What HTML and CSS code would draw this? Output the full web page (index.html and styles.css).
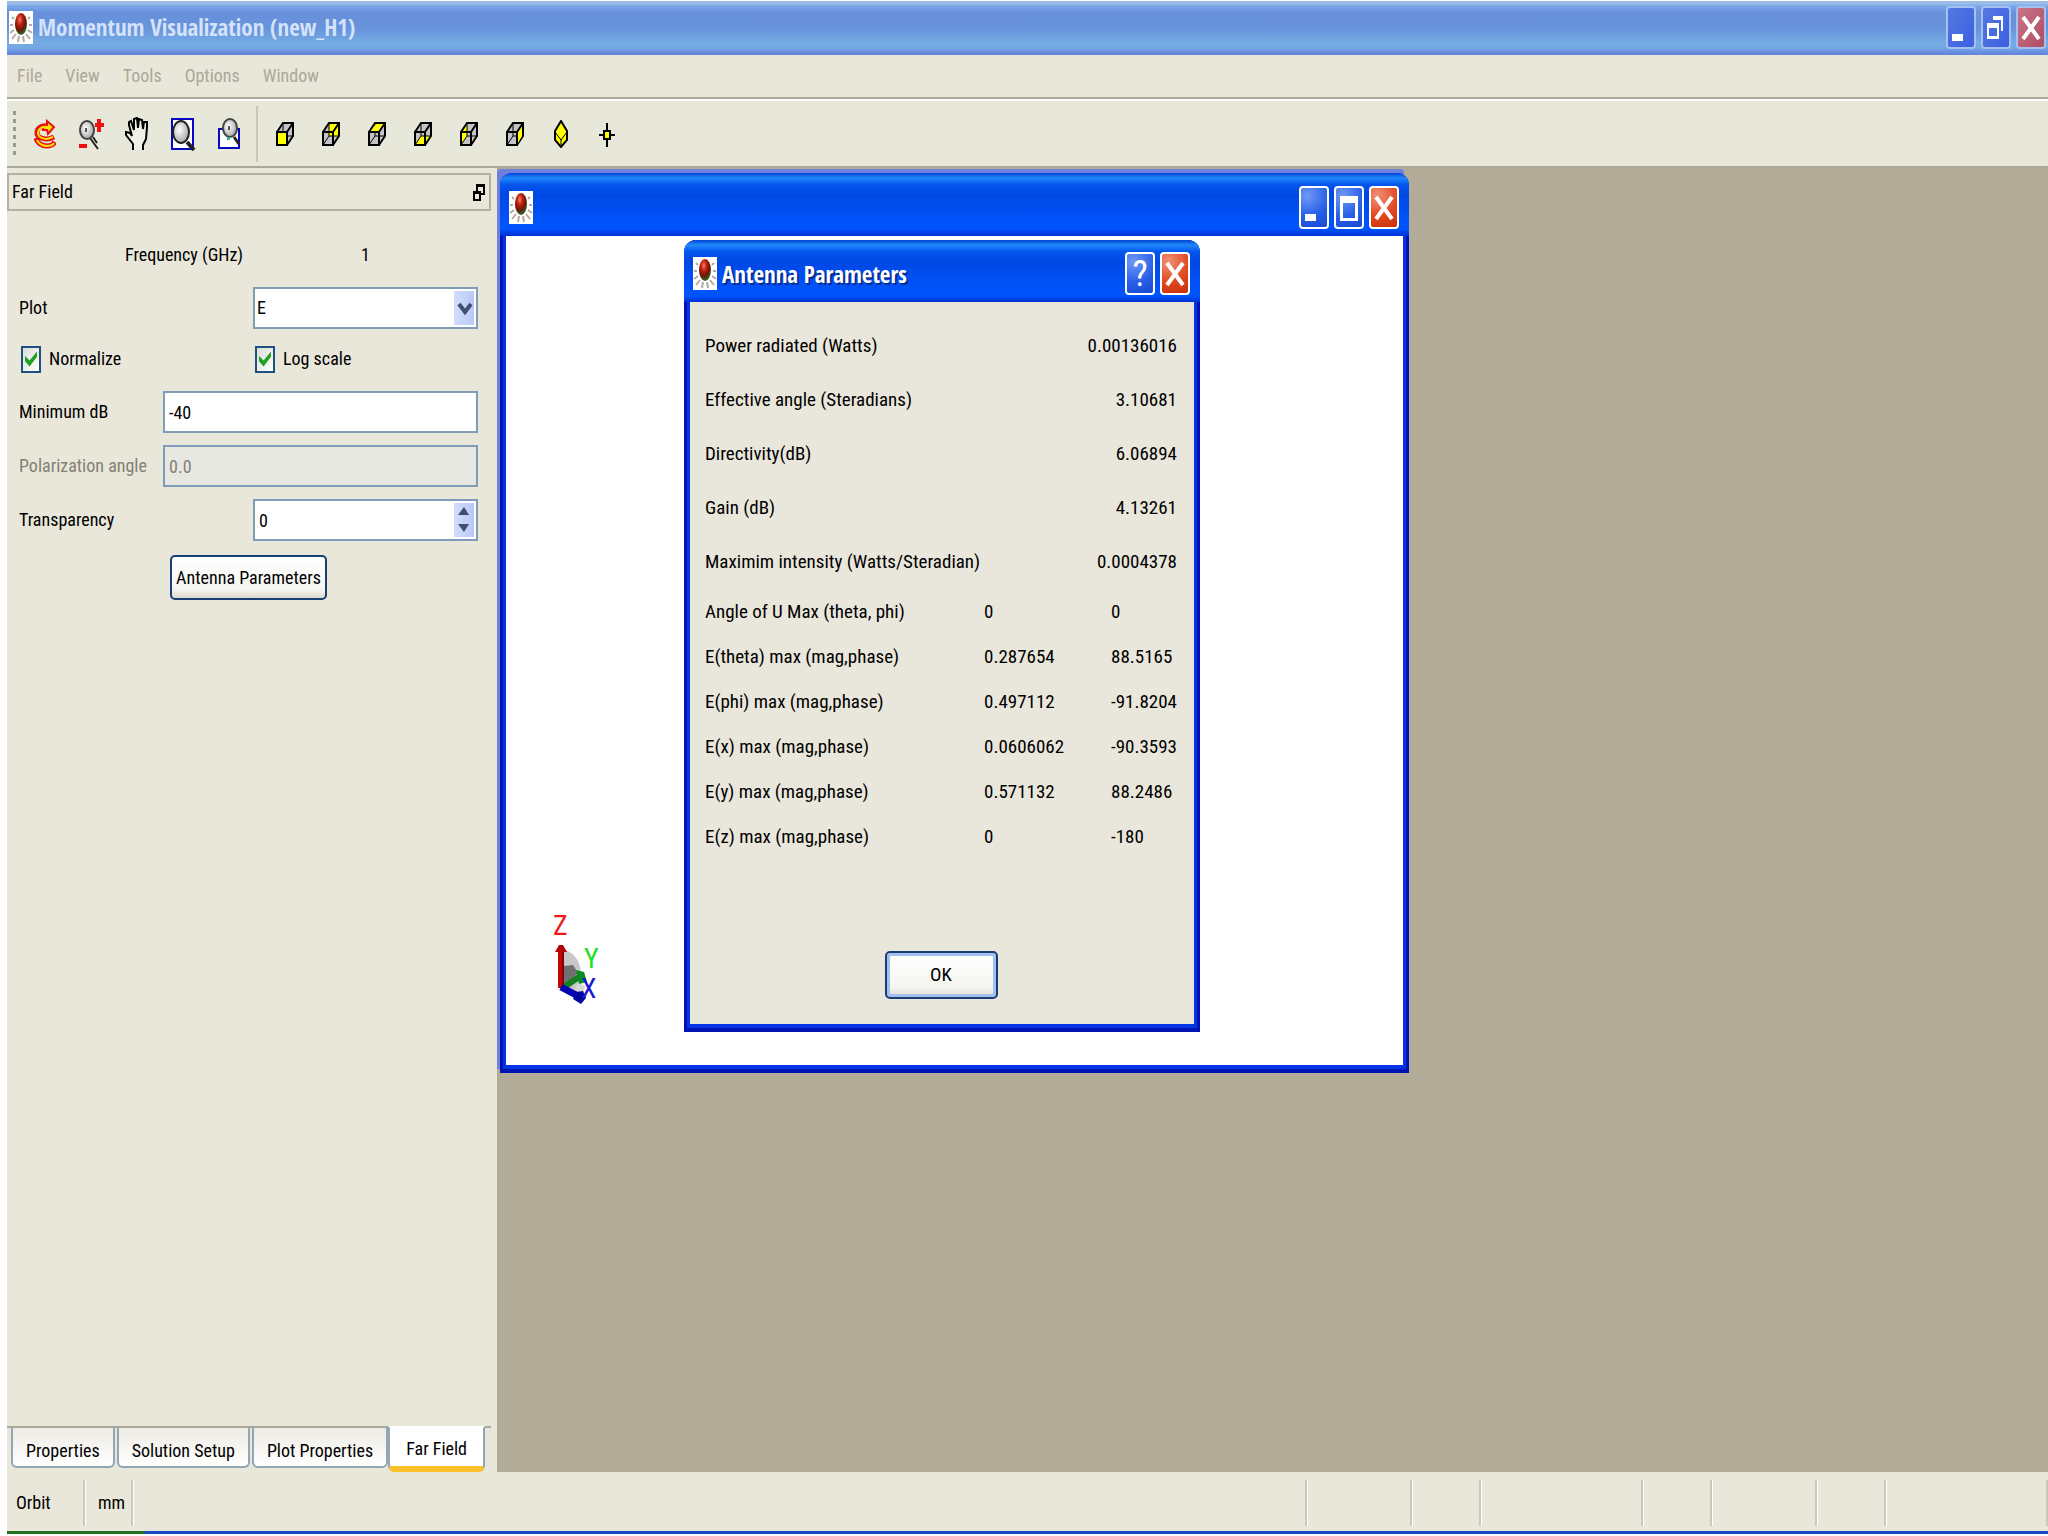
FILE: index.html
```
<!DOCTYPE html>
<html lang="en">
<head>
    <meta charset="utf-8">
    <title>Momentum Visualization (new_H1)</title>
    <link rel="stylesheet" href="styles.css">
</head>
<body>
    <!-- shared drawings -->
    <svg class="defs" aria-hidden="true">
        <defs>
            <radialGradient id="ball" cx="0.4" cy="0.3" r="0.8">
                <stop offset="0" stop-color="#f08060"/>
                <stop offset="0.3" stop-color="#c02010"/>
                <stop offset="0.6" stop-color="#701408"/>
                <stop offset="0.85" stop-color="#2c6a20"/>
                <stop offset="1" stop-color="#142808"/>
            </radialGradient>
            <radialGradient id="lens" cx="0.4" cy="0.4" r="0.6">
                <stop offset="0" stop-color="#fff"/>
                <stop offset="1" stop-color="#aaa"/>
            </radialGradient>
            <symbol id="logo" viewBox="0 0 24 33">
                <rect width="24" height="33" fill="#fff"/>
                <path d="M5 8l-2-2M4 14H1M5 19l-4 3M7 23l-4 5M10 25l-1 6M14 25l1 6M17 23l4 5M19 19l4 3M20 14h3M19 8l2-2" stroke="#b8a8a4" stroke-width="2"/>
                <ellipse cx="12" cy="13" rx="6" ry="11" fill="url(#ball)"/>
            </symbol>
            <symbol id="cube" viewBox="0 0 18 24">
                <path d="M1 10L7 1h10v13l-6 9H1z" fill="#c4c4c8"/>
            </symbol>
            <symbol id="cubeLines" viewBox="0 0 18 24">
                <path d="M1 10h10v13H1zM1 10L7 1h10v13l-6 9M11 10l6-9" fill="none" stroke="#000" stroke-width="2"/>
                <path d="M7 1v13h10M7 14l-6 9" fill="none" stroke="#000" stroke-width="1"/>
            </symbol>
            <symbol id="minimize" viewBox="0 0 30 43"><rect x="6" y="28" width="11" height="7" fill="#fff"/></symbol>
            <symbol id="maximize" viewBox="0 0 30 43"><path d="M6 10h18v25H6zM9 17v15h12V17z" fill="#fff" fill-rule="evenodd"/></symbol>
            <symbol id="restore" viewBox="0 0 30 43"><path d="M12 10h10v15h-2V14h-8zM6 17h12v16H6zM8 22v8h8V22z" fill="#fff" fill-rule="evenodd"/></symbol>
            <symbol id="close" viewBox="0 0 30 43"><path d="M7 11l16 22M23 11L7 33" stroke="#fff" stroke-width="4"/></symbol>
        </defs>
    </svg>

    <header class="appTitle">
        <svg class="logo"><use href="#logo"/></svg>
        <h1>Momentum Visualization (new_H1)</h1>
        <button class="winBtn" aria-label="Minimize"><svg><use href="#minimize"/></svg></button>
        <button class="winBtn" aria-label="Restore"><svg><use href="#restore"/></svg></button>
        <button class="winBtn red" aria-label="Close"><svg><use href="#close"/></svg></button>
    </header>

    <nav class="menu">
        <a href="#">File</a>
        <a href="#">View</a>
        <a href="#">Tools</a>
        <a href="#">Options</a>
        <a href="#">Window</a>
    </nav>

    <div class="toolbar">
        <span class="grip"></span>
        <button aria-label="Orbit">
            <svg width="22" height="30" viewBox="0 0 22 30">
                <path d="M14 7C7 6 3 9 3 14c0 4 5 6 10 6 3 0 5-1 7-2M2 19c1 5 6 8 11 8 3 0 6-1 8-4" fill="none" stroke="#e81010" stroke-width="5"/>
                <path d="M13 2l7 6-6 7-1-4H9V6h4z" fill="#ffe000" stroke="#e81010" stroke-width="2"/>
                <path d="M14 8C8 7 4 10 4 14c0 4 5 6 9 6l6-2M3 21c2 4 6 6 10 6 3 0 6-1 7-3" fill="none" stroke="#ffe000" stroke-width="2"/>
            </svg>
        </button>
        <button aria-label="Zoom in or out">
            <svg width="26" height="32" viewBox="0 0 26 32">
                <path d="M12 20l8 11M15 19l4 6" stroke="#222" stroke-width="2"/>
                <ellipse cx="9" cy="12" rx="7" ry="9" fill="url(#lens)" stroke="#444" stroke-width="2"/>
                <path d="M8 10v4" stroke="#555" stroke-width="2"/>
                <path d="M17 7h9M21 1v13M1 28h8" stroke="#f01010" stroke-width="4"/>
            </svg>
        </button>
        <button aria-label="Pan">
            <svg width="26" height="34" viewBox="0 0 26 34">
                <path d="M9 33v-6l-7-9v-3l4 1 2 3L5 8V5l2-1 3 9V2l3-1 1 10 1-9 3 1 1 9 1-7h3v5l-1 12-3 6v5" fill="#f0f0e6" stroke="#000" stroke-width="2"/>
            </svg>
        </button>
        <button aria-label="Zoom to fit">
            <svg width="26" height="34" viewBox="0 0 26 34">
                <rect x="2" y="2" width="21" height="30" fill="#fff" stroke="#0808c0" stroke-width="2"/>
                <path d="M17 25l7 8" stroke="#222" stroke-width="4"/>
                <ellipse cx="11" cy="15" rx="8" ry="11" fill="url(#lens)" stroke="#222" stroke-width="2"/>
            </svg>
        </button>
        <button aria-label="Zoom window">
            <svg width="24" height="34" viewBox="0 0 24 34">
                <path d="M2 12h20v19H2z" fill="#fff" stroke="#0808c0" stroke-width="2"/>
                <path d="M17 20l5 7" stroke="#222" stroke-width="3"/>
                <ellipse cx="13" cy="11" rx="7" ry="9" fill="url(#lens)" stroke="#444" stroke-width="2"/>
                <path d="M12 9v4" stroke="#555" stroke-width="2"/>
                <path d="M10 20h3v3h-3z" fill="#30b898"/>
            </svg>
        </button>
        <span class="sep"></span>
        <button aria-label="Front view">
            <svg width="18" height="24"><use href="#cube"/><use href="#cubeLines"/><path d="M2 11h8v11H2z" fill="#ff0"/></svg>
        </button>
        <button aria-label="Back view">
            <svg width="18" height="24"><use href="#cube"/><path d="M7 1h10v13H7z" fill="#ff0"/><use href="#cubeLines"/></svg>
        </button>
        <button aria-label="Top view">
            <svg width="18" height="24"><use href="#cube"/><use href="#cubeLines"/><path d="M3 9l5-7h7l-5 7z" fill="#ff0"/></svg>
        </button>
        <button aria-label="Bottom view">
            <svg width="18" height="24"><use href="#cube"/><path d="M1 23l6-9h10l-6 9z" fill="#ff0"/><use href="#cubeLines"/></svg>
        </button>
        <button aria-label="Left view">
            <svg width="18" height="24"><use href="#cube"/><path d="M1 10l6-9v13l-6 9z" fill="#ff0"/><use href="#cubeLines"/></svg>
        </button>
        <button aria-label="Right view">
            <svg width="18" height="24"><use href="#cube"/><use href="#cubeLines"/><path d="M12 11l4-6v9l-4 7z" fill="#ff0"/></svg>
        </button>
        <button aria-label="Isometric view">
            <svg width="16" height="28" viewBox="0 0 16 28">
                <path d="M8 1l6 10v9l-6 7-6-7v-9z" fill="#ff0" stroke="#000" stroke-width="2"/>
                <path d="M2 12l6 8 6-8M8 19v8" fill="none" stroke="#000"/>
            </svg>
        </button>
        <button aria-label="Center point">
            <svg width="18" height="26" viewBox="0 0 18 26">
                <path d="M9 2v24M1 14h16" stroke="#000" stroke-width="2"/>
                <path d="M6 10h6v8H6z" fill="#ff0" stroke="#000" stroke-width="2"/>
            </svg>
        </button>
    </div>

    <main>
        <aside class="dock">
            <div class="dockTitle">
                <h2>Far Field</h2>
                <button aria-label="Undock">
                    <svg width="14" height="20" viewBox="0 0 14 20">
                        <path d="M5 9V3h7v9H9M5 4h7" fill="none" stroke="#000" stroke-width="2"/>
                        <path d="M2 10h6v8H2zM2 11h6" fill="none" stroke="#000" stroke-width="2"/>
                    </svg>
                </button>
            </div>
            <form class="fields">
                <div class="row freq"><span>Frequency (GHz)</span><span>1</span></div>
                <div class="row split">
                    <label for="plot">Plot</label>
                    <div class="box">
                        <select id="plot"><option>E</option></select>
                        <svg class="arrow" viewBox="0 0 20 34"><path d="M5 13l6 8 6-8" fill="none" stroke="#404c70" stroke-width="4"/></svg>
                    </div>
                </div>
                <div class="row split checks">
                    <label><input type="checkbox" checked> Normalize</label>
                    <label><input type="checkbox" checked> Log scale</label>
                </div>
                <div class="row wide">
                    <label for="minDb">Minimum dB</label>
                    <div class="box"><input type="text" id="minDb" value="-40"></div>
                </div>
                <div class="row wide off">
                    <label for="polar">Polarization angle</label>
                    <div class="box"><input type="text" id="polar" value="0.0" disabled></div>
                </div>
                <div class="row split">
                    <label for="transparency">Transparency</label>
                    <div class="box">
                        <input type="text" id="transparency" value="0">
                        <div class="spin">
                            <button type="button" aria-label="Increase"><svg viewBox="0 0 20 17"><path d="M4 12h11l-5-8z" fill="#404c70"/></svg></button>
                            <button type="button" aria-label="Decrease"><svg viewBox="0 0 20 17"><path d="M4 4h11l-5 8z" fill="#404c70"/></svg></button>
                        </div>
                    </div>
                </div>
                <button type="button" class="btn">Antenna Parameters</button>
            </form>
            <div class="tabs">
                <button>Properties</button>
                <button>Solution Setup</button>
                <button>Plot Properties</button>
                <button class="active">Far Field</button>
            </div>
        </aside>

        <section class="workspace">
            <div class="behind"></div>
            <div class="window plotWin">
                <div class="bar">
                    <svg class="logo"><use href="#logo"/></svg>
                    <h2></h2>
                    <button class="winBtn" aria-label="Minimize"><svg><use href="#minimize"/></svg></button>
                    <button class="winBtn" aria-label="Maximize"><svg><use href="#maximize"/></svg></button>
                    <button class="winBtn red" aria-label="Close"><svg><use href="#close"/></svg></button>
                </div>
                <div class="canvas">
                    <svg class="axes" width="60" height="100" viewBox="0 0 60 100">
                        <path d="M14 42q16 4 17 24l-3 18-14-5z" fill="#c8c8c8"/>
                        <path d="M14 58l9-1 5 8-14 15z" fill="#707070"/>
                        <path d="M28 74l7 4-2 8-9-3z" fill="#d8d8d8"/>
                        <path d="M14 79l15-10" stroke="#108020" stroke-width="6"/>
                        <path d="M26 62l8 2 3 10-8 2z" fill="#0c8c1c"/>
                        <path d="M11 43v37" stroke="#c00808" stroke-width="6"/>
                        <path d="M13 43v36" stroke="#800404" stroke-width="2"/>
                        <path d="M5 44l4-7h4l4 7z" fill="#b00404"/>
                        <path d="M11 79l17 9" stroke="#0404b0" stroke-width="7"/>
                        <path d="M26 84l7-1 3 7-5 6-8-5z" fill="#0404a0"/>
                        <text x="3" y="27" fill="#f01818">Z</text>
                        <text x="34" y="60" fill="#20e020">Y</text>
                        <text x="31" y="90" fill="#1818d0">X</text>
                    </svg>
                </div>
            </div>

            <div class="window dialog" role="dialog" aria-label="Antenna Parameters">
                <div class="bar">
                    <svg class="logo"><use href="#logo"/></svg>
                    <h2>Antenna Parameters</h2>
                    <button class="winBtn help" aria-label="Help">?</button>
                    <button class="winBtn red" aria-label="Close"><svg><use href="#close"/></svg></button>
                </div>
                <div class="dialogBody">
                    <table>
                        <colgroup>
                            <col class="name">
                            <col class="mag">
                            <col>
                        </colgroup>
                        <tbody class="single">
                            <tr><th>Power radiated (Watts)</th><td colspan="2">0.00136016</td></tr>
                            <tr><th>Effective angle (Steradians)</th><td colspan="2">3.10681</td></tr>
                            <tr><th>Directivity(dB)</th><td colspan="2">6.06894</td></tr>
                            <tr><th>Gain (dB)</th><td colspan="2">4.13261</td></tr>
                            <tr><th>Maximim intensity (Watts/Steradian)</th><td colspan="2">0.0004378</td></tr>
                        </tbody>
                        <tbody class="pair">
                            <tr><th>Angle of U Max (theta, phi)</th><td>0</td><td>0</td></tr>
                            <tr><th>E(theta) max (mag,phase)</th><td>0.287654</td><td>88.5165</td></tr>
                            <tr><th>E(phi) max (mag,phase)</th><td>0.497112</td><td>-91.8204</td></tr>
                            <tr><th>E(x) max (mag,phase)</th><td>0.0606062</td><td>-90.3593</td></tr>
                            <tr><th>E(y) max (mag,phase)</th><td>0.571132</td><td>88.2486</td></tr>
                            <tr><th>E(z) max (mag,phase)</th><td>0</td><td>-180</td></tr>
                        </tbody>
                    </table>
                    <button class="btn ok">OK</button>
                </div>
            </div>
        </section>
    </main>

    <footer class="status">
        <span class="mode">Orbit</span>
        <span class="unit">mm</span>
        <span class="fill"></span>
        <span class="long"></span>
        <span class="short"></span>
        <span class="longer"></span>
        <span class="short"></span>
        <span class="long"></span>
        <span class="short"></span>
        <span class="longer"></span>
    </footer>
    <div class="taskbar"></div>
</body>
</html>
```

FILE: styles.css
```
*{
    box-sizing:border-box;
}

body{
    margin:0px;
    padding:1px 0px 2px 7px;
    min-height:100vh;
    display:flex;
    flex-direction:column;
    background-color:white;
    font-family:"Roboto Condensed", "Noto Sans Condensed", "Liberation Sans", sans-serif;
    font-size:18px;
    line-height:28px;
    color:black;
}

button, input, select{
    font:inherit;
    color:inherit;
    margin:0px;
    padding:0px;
    border:0px none black;
    background:none;
    border-radius:0px;
}

h1, h2{
    margin:0px;
    font-family:"Open Sans Condensed", "Liberation Sans", sans-serif;
    font-size:23px;
    font-weight:bold;
}

.defs{
    position:absolute;
    width:0px;
    height:0px;
}

/* title bars */
.appTitle{
    height:54px;
    display:flex;
    align-items:center;
    gap:5px;
    padding:0px 2px 2px 2px;
    background:linear-gradient(#9cbce8 0px, #9cbce8 3px, #78a8e8 5px, #6890dc 12px, #6894dc 28px, #74ace4 42px, #74a8e4 47px, #6484dc 53px);
}

.appTitle h1{
    flex:1;
    color:#d4e2fa;
}

.logo{
    width:24px;
    height:33px;
    flex:none;
}

.winBtn{
    width:30px;
    height:43px;
    flex:none;
    border:2px solid white;
    border-radius:4px;
    background:radial-gradient(circle at 25% 20%, #7098f4, #2860e8 55%, #1848d0);
    color:white;
}

.winBtn svg{
    display:block;
    width:30px;
    height:43px;
    margin:-2px;
}

.winBtn.red{
    background:radial-gradient(circle at 25% 20%, #f09078, #e04820 55%, #c83008);
}

.appTitle .winBtn{
    border-color:#a4c0f0;
    background:linear-gradient(120deg, #5478e0, #3c60e0);
}

.appTitle .winBtn.red{
    background:linear-gradient(120deg, #c87488, #b04c64);
}

.help{
    font-size:36px;
    line-height:38px;
}

/* menu and toolbar */
.menu{
    height:44px;
    display:flex;
    gap:23px;
    padding:7px 10px;
    background-color:#e9e7da;
    border-bottom:2px solid #aca899;
}

.menu a{
    color:#aca899;
    text-decoration:none;
}

.toolbar{
    height:68px;
    display:flex;
    align-items:center;
    background-color:#e8e8da;
    border-top:2px solid white;
    border-bottom:1px solid #aca899;
}

.toolbar button{
    width:46px;
    height:50px;
    display:flex;
    align-items:center;
    justify-content:center;
}

.grip{
    width:3px;
    height:46px;
    margin:0px 6px;
    background:repeating-linear-gradient(#9c9a8c 0px, #9c9a8c 4px, #e8e8da 4px, #e8e8da 8px);
}

.sep{
    width:2px;
    height:56px;
    margin:0px 4px;
    background-color:#cac7b8;
}

/* left dock */
main{
    flex:1;
    display:flex;
}

.dock{
    width:490px;
    flex:none;
    display:flex;
    flex-direction:column;
    background-color:#e9e7da;
    border-top:1px solid #aca899;
}

.dockTitle{
    height:38px;
    margin:5px 6px 0px 0px;
    padding:0px 3px;
    display:flex;
    align-items:center;
    justify-content:space-between;
    border:2px solid #b4b1a2;
}

.dockTitle h2{
    font-family:inherit;
    font-size:18px;
    font-weight:normal;
}

.dockTitle button, .dockTitle svg{
    display:block;
}

.fields{
    flex:1;
    display:flex;
    flex-direction:column;
    gap:12px;
    padding:30px 19px 0px 12px;
}

.row{
    display:grid;
    align-items:center;
    white-space:nowrap;
}

.split{
    grid-template-columns:1fr 225px;
}

.wide{
    grid-template-columns:1fr 315px;
}

.freq{
    grid-template-columns:236px 1fr;
    padding-left:106px;
    margin-bottom:6px;
}

.box{
    height:42px;
    display:flex;
    align-items:center;
    position:relative;
    padding:2px;
    border:2px solid #7f9db9;
    background-color:white;
}

.box input, .box select{
    flex:1;
    min-width:0px;
    height:34px;
    padding-left:2px;
    appearance:none;
    outline:none;
}

.box select{
    padding-left:0px;
}

.arrow{
    position:absolute;
    right:2px;
    top:2px;
    width:20px;
    height:34px;
    background:linear-gradient(90deg, #d4dcfc, #b8c8f8);
    pointer-events:none;
}

.spin{
    width:20px;
    background:linear-gradient(90deg, #d4dcfc, #b8c8f8);
}

.spin button, .spin svg{
    display:block;
    width:20px;
    height:17px;
}

.off{
    color:#838175;
}

.off .box{
    background-color:#e8e8e2;
}

.checks{
    height:28px;
    margin:4px 0px 6px;
}

.checks label{
    display:flex;
    align-items:center;
    gap:8px;
    padding-left:2px;
}

.checks input{
    appearance:none;
    width:20px;
    height:27px;
    border:2px solid #1c5180;
    background:linear-gradient(135deg, #dcdcd8, white);
}

.checks input:checked::before{
    content:"";
    display:block;
    width:12px;
    height:15px;
    margin:4px 2px;
    background-color:#21a121;
    clip-path:polygon(0% 30%, 38% 60%, 100% 0%, 100% 35%, 38% 100%, 0% 65%);
}

.btn{
    align-self:center;
    height:45px;
    margin-top:2px;
    padding:0px 4px;
    border:2px solid #183c74;
    border-radius:5px;
    background:linear-gradient(white, #f4f4f0 80%, #dcd8cc);
    white-space:nowrap;
}

.tabs{
    height:46px;
    display:flex;
    align-items:flex-start;
    gap:2px;
    margin-right:6px;
    padding-left:4px;
    background:linear-gradient(#aca899, #aca899) top / 100% 2px no-repeat;
}

.tabs button{
    height:42px;
    padding:8px 13px 0px;
    border:2px solid #91a7b4;
    border-top-color:#aca899;
    border-radius:0px 0px 6px 6px;
    background:linear-gradient(#ecebe4, white);
    white-space:nowrap;
}

.tabs .active{
    height:46px;
    margin-left:-2px;
    padding:4px 16px 0px;
    border-top-color:white;
    border-bottom:6px solid #fcc02c;
    background:white;
}

/* windows */
.workspace{
    flex:1;
    position:relative;
    background-color:#b1ab97;
}

.window{
    position:absolute;
    display:flex;
    flex-direction:column;
    padding:0px 3px 4px;
    border:solid #0014b4;
    border-width:0px 3px 4px;
    border-radius:12px 12px 0px 0px;
    background-color:#0434e4;
}

.bar{
    display:flex;
    align-items:center;
    gap:5px;
    margin:0px -6px;
    padding:5px 10px 0px 9px;
    border-radius:12px 12px 0px 0px;
    background:linear-gradient(#0044d0 0px, #2088fc 5px, #0454ec 12px, #0048e4 22px, #0054fc 50px, #0054fc 56px, #0030d0 100%);
}

.bar h2{
    flex:1;
    color:white;
    text-shadow:2px 2px #0c2c90;
}

.behind{
    position:absolute;
    left:0px;
    top:2px;
    width:907px;
    height:900px;
    border-radius:4px 4px 0px 0px;
    background-color:#6c80dc;
}

.plotWin{
    left:3px;
    top:6px;
    width:909px;
    height:900px;
}

.plotWin .bar{
    height:63px;
}

.canvas{
    flex:1;
    background-color:white;
}

.axes{
    display:block;
    margin:672px 0px 0px 44px;
    font-size:28px;
}

.dialog{
    left:187px;
    top:73px;
    width:516px;
    font-size:19px;
}

.dialog .bar{
    height:62px;
}

.dialogBody{
    flex:1;
    display:flex;
    flex-direction:column;
    padding:17px 17px 25px 15px;
    background-color:#e9e6db;
}

.dialogBody table{
    border-collapse:collapse;
    table-layout:fixed;
    width:100%;
}

.name{
    width:279px;
}

.mag{
    width:127px;
}

.dialogBody th{
    padding:0px;
    font-weight:normal;
    text-align:left;
    white-space:nowrap;
}

.dialogBody td{
    padding:0px;
}

.single tr{
    height:54px;
}

.single td{
    text-align:right;
}

.pair tr{
    height:45px;
}

.ok{
    width:113px;
    height:48px;
    margin-top:92px;
    box-shadow:inset 0px 0px 0px 3px #a4c0f0;
}

/* status bar */
.status{
    height:59px;
    display:flex;
    padding:8px 0px 5px;
    background-color:#e9e7da;
}

.status span{
    flex:none;
    border-right:2px solid #cdc9b8;
    box-shadow:1px 0px white;
    line-height:46px;
}

.status .mode{
    width:78px;
    padding-left:9px;
}

.status .unit{
    width:48px;
    padding-left:13px;
}

.status .fill{
    flex:1;
}

.status .long{
    width:105px;
}

.status .short{
    width:69px;
}

.status .longer{
    width:162px;
}

.taskbar{
    height:3px;
    background:linear-gradient(90deg, #207020 138px, #1c48c4 138px);
}
```
